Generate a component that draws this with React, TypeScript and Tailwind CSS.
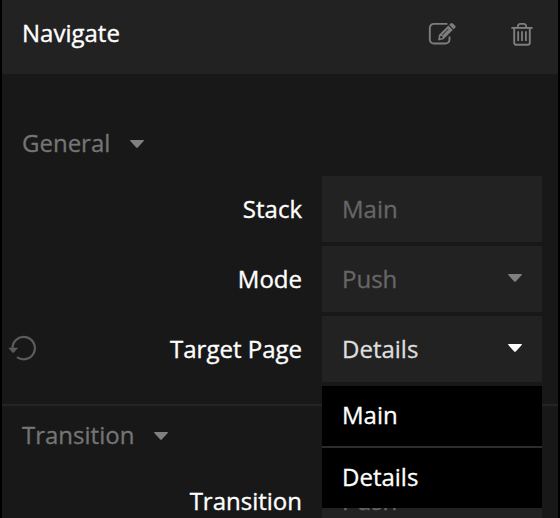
import type { ReactNode } from "react";

function EditIcon() {
  return (
    <svg width="28" height="24" viewBox="0 0 28 24" fill="none" className="block">
      <path
        d="M19.4 1.9H6a4 4 0 0 0-4.2 4v11.5a4 4 0 0 0 4.2 4.1h11.4a4 4 0 0 0 4.1-4.1v-2.9"
        stroke="#7e7e7e"
        strokeWidth="1.9"
      />
      <path
        fillRule="evenodd"
        clipRule="evenodd"
        d="M20.4 3.6l4.4 4.4-9.4 9.3-5.3 1.1.8-5.4zM12.4 14l-.4 2.5 2.6-.5-.2-1.7zM20.1 6.7l-6.2 6.3.5.5 6.2-6.3z"
        fill="#7e7e7e"
      />
      <path d="M21.2 2.8l1.3-1.3a1.6 1.6 0 0 1 2.3 0l2.2 2.1a1.6 1.6 0 0 1 0 2.3L25.6 7.2z" fill="#7e7e7e" />
    </svg>
  );
}

function TrashIcon() {
  return (
    <svg width="22" height="24" viewBox="0 0 22 24" fill="none" stroke="#7e7e7e" className="block">
      <path d="M0.4 5.9h21.2" strokeWidth="1.9" />
      <path d="M6.9 5.5V4.2a2.3 2.3 0 0 1 2.3-2.4h3.6a2.3 2.3 0 0 1 2.3 2.4v1.3" strokeWidth="1.8" />
      <path d="M3.2 6v14.8a2 2 0 0 0 2 2h11.6a2 2 0 0 0 2-2V6" strokeWidth="1.9" />
      <path d="M7.2 9.2V19M11 9.2V19M14.9 9.2V19" strokeWidth="1.8" />
    </svg>
  );
}

function ResetIcon() {
  return (
    <svg width="30" height="28" viewBox="-1 -1 30 28" fill="none" className="block">
      <path d="M3.5 12.5A11.2 11.2 0 1 1 8 21.1" stroke="#5b5b5b" strokeWidth="2.3" />
      <path d="M-0.8 11.8h10l-5 5.4z" fill="#5b5b5b" />
    </svg>
  );
}

function Caret({ color = "#808080" }: { color?: string }) {
  return (
    <svg width="14" height="8" viewBox="0 0 14 8" className="block shrink-0">
      <path d="M0.6 0h12.8q.9.2.3 1L7.8 7.5q-.8.7-1.6 0L.3 1q-.6-.8.3-1z" fill={color} />
    </svg>
  );
}

function SectionTitle({ children }: { children: ReactNode }) {
  return (
    <div className="flex h-[34px] items-center gap-5 pl-5 text-[#757575] [-webkit-text-stroke:0.3px_#757575]">
      <span>{children}</span>
      <span className="pt-[2px]">
        <Caret />
      </span>
    </div>
  );
}

interface FieldProps {
  label: string;
  value: string;
  active?: boolean;
  caret?: boolean;
  children?: ReactNode;
}

function Field({ label, value, active, caret, children }: FieldProps) {
  return (
    <div className="flex h-[66px] shrink-0 items-center">
      <div className="flex w-[320px] items-center justify-between pr-5 pl-[6px]">
        <span>{active && <ResetIcon />}</span>
        <span className="text-white [-webkit-text-stroke:0.35px_white]">{label}</span>
      </div>
      <div className="relative flex h-full w-[220px] items-center justify-between bg-[#222] px-5">
        <span
          className={
            active
              ? "text-[#dedede] [-webkit-text-stroke:0.3px_#dedede]"
              : "text-[#666] [-webkit-text-stroke:0.3px_#666]"
          }
        >
          {value}
        </span>
        {caret && (
          <span className="pb-[2px]">
            <Caret color={active ? "#ffffff" : "#808080"} />
          </span>
        )}
        {children}
      </div>
    </div>
  );
}

function Options() {
  return (
    <ul className="absolute top-[70px] left-0 z-10 w-[220px] bg-black text-white [-webkit-text-stroke:0.3px_white]">
      <li className="flex h-[62px] items-center border-b-2 border-[#2d2d2d] px-5 pb-[2px]">Main</li>
      <li className="flex h-[60px] items-center px-5 pb-[2px]">Details</li>
    </ul>
  );
}

export default function App() {
  return (
    <div className="h-[518px] w-[560px] overflow-hidden border-x-2 border-black bg-[#181818] font-['Open_Sans',sans-serif] text-[24px] leading-[34px]">
      <header className="flex h-[74px] items-center justify-between bg-[#222] pr-[25px] pb-[6px] pl-5">
        <h1 className="pb-[2px] text-white [-webkit-text-stroke:0.35px_white]">Navigate</h1>
        <div className="flex items-center gap-[55px]">
          <EditIcon />
          <TrashIcon />
        </div>
      </header>
      <section className="flex h-[330px] flex-col pt-[52px]">
        <SectionTitle>General</SectionTitle>
        <div className="mt-4 flex flex-col gap-1">
          <Field label="Stack" value="Main" />
          <Field label="Mode" value="Push" caret />
          <Field label="Target Page" value="Details" active caret>
            <Options />
          </Field>
        </div>
      </section>
      <section className="border-t-2 border-[#242424] pt-[12px]">
        <SectionTitle>Transition</SectionTitle>
        <div className="mt-4">
          <Field label="Transition" value="Push" />
        </div>
      </section>
    </div>
  );
}
